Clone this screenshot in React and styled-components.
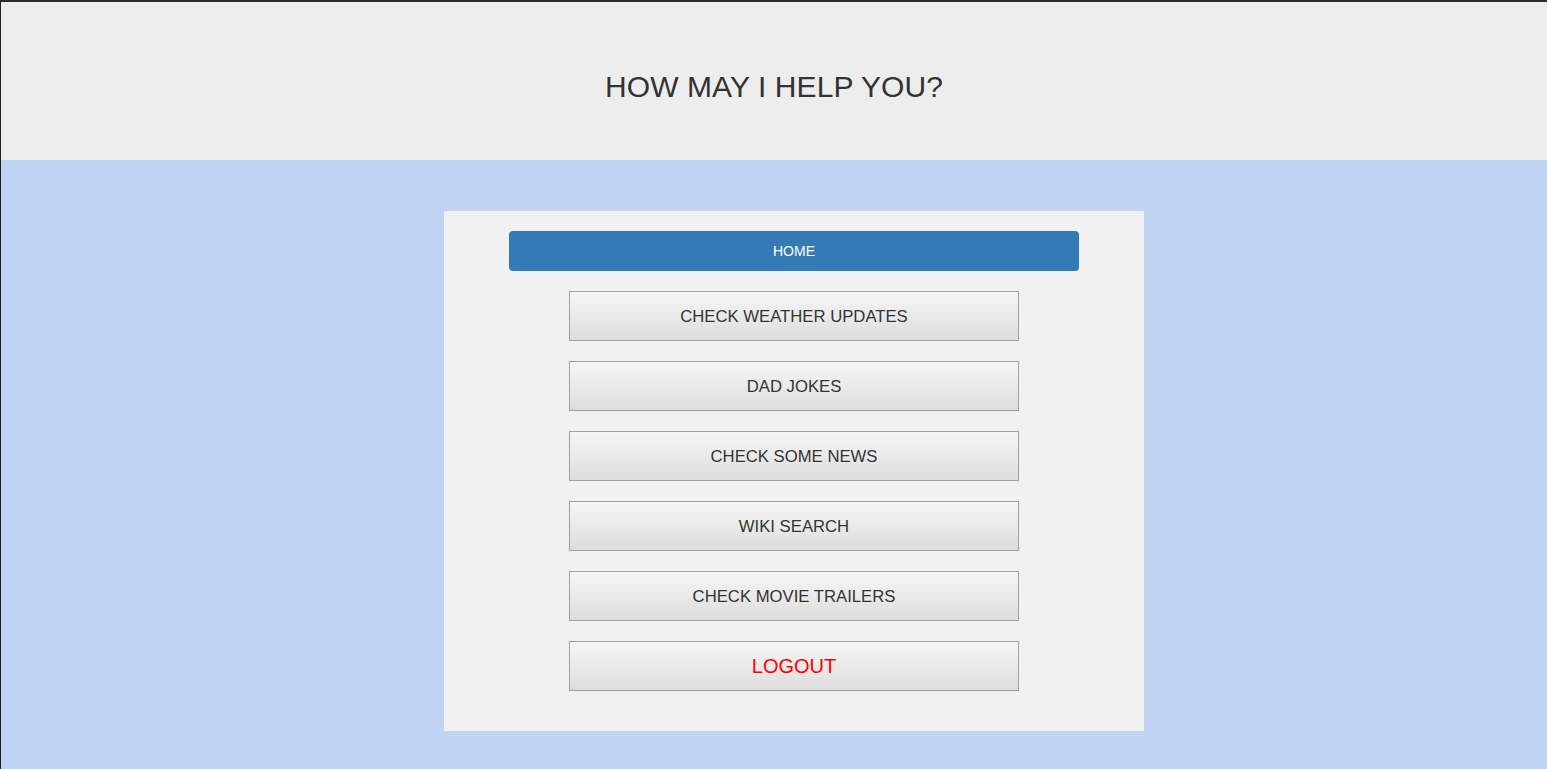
import React from 'react';
import styled, { createGlobalStyle } from 'styled-components';

const GlobalStyle = createGlobalStyle`
  html, body {
    margin: 0;
    padding: 0;
    height: 100%;
  }
  body {
    font-family: "Liberation Sans", Arial, sans-serif;
    background: #c0d3f3;
    border-left: 1px solid #1e1e1e;
    border-top: 2px solid #2a2a2a;
    box-sizing: border-box;
    overflow: hidden;
  }
`;

const Header = styled.header`
  height: 158px;
  box-sizing: border-box;
  padding-top: 12px;
  background: #ededed;
  display: flex;
  align-items: center;
  justify-content: center;
`;

const Title = styled.h1`
  margin: 0;
  font-size: 30px;
  font-weight: normal;
  color: #333;
  letter-spacing: 0.1px;
`;

const Main = styled.main`
  padding-top: 51px;
`;

const Card = styled.div`
  width: 700px;
  margin-left: calc(50% - 330px);
  background: #f1f1f1;
  padding: 20px 0 40px;
  display: flex;
  flex-direction: column;
  align-items: center;
  gap: 20px;
`;

const HomeButton = styled.button`
  width: 570px;
  height: 40px;
  border: none;
  border-radius: 4px;
  background: #337ab7;
  color: #fff;
  font-family: inherit;
  font-size: 14px;
  cursor: pointer;
`;

const MenuButton = styled.button`
  width: 450px;
  height: 50px;
  padding-top: 2px;
  border: 1px solid #a0a0a0;
  background: linear-gradient(to bottom, #f6f6f6 0%, #dddddd 100%);
  color: ${p => (p.$danger ? '#ff0000' : '#333')};
  font-family: inherit;
  font-size: ${p => (p.$danger ? '20px' : '16.7px')};
  cursor: pointer;
`;

const items = [
  'CHECK WEATHER UPDATES',
  'DAD JOKES',
  'CHECK SOME NEWS',
  'WIKI SEARCH',
  'CHECK MOVIE TRAILERS',
];

export default function App() {
  return (
    <>
      <GlobalStyle />
      <Header>
        <Title>HOW MAY I HELP YOU?</Title>
      </Header>
      <Main>
        <Card>
          <HomeButton>HOME</HomeButton>
          {items.map(label => (
            <MenuButton key={label}>{label}</MenuButton>
          ))}
          <MenuButton $danger>LOGOUT</MenuButton>
        </Card>
      </Main>
    </>
  );
}
